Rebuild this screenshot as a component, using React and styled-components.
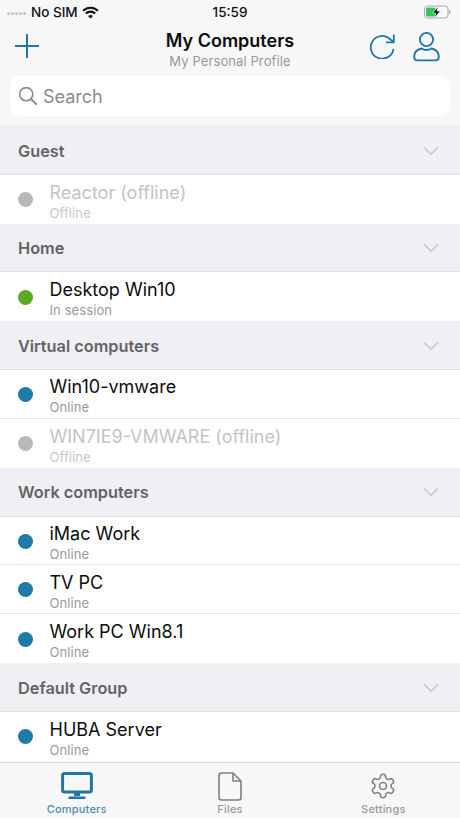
import React from 'react';
import styled, { createGlobalStyle } from 'styled-components';
import { ChevronDown } from 'lucide-react';

const Global = createGlobalStyle`
  html, body { margin: 0; padding: 0; background: #f7f7f8; }
  * { box-sizing: border-box; }
  body { font-family: Inter, "Liberation Sans", sans-serif; -webkit-font-smoothing: antialiased; }
`;

const Page = styled.div`
  width: 460px; height: 818px; overflow: hidden; display: flex; flex-direction: column; background: #f7f7f8;
`;
const StatusBar = styled.div`
  height: 22px; padding: 2px 7px 0 7px; display: grid; grid-template-columns: 1fr auto 1fr; align-items: center;
  font-size: 13.5px; font-weight: 500; color: #111;
`;
const StatusLeft = styled.div`display: flex; align-items: center; gap: 4px;`;
const Dots = styled.div`display: flex; gap: 1px; padding-top: 3px; margin-right: 1px;`;
const Dot = styled.span`width: 3px; height: 3px; border-radius: 50%; background: #c4c4c6;`;
const StatusRight = styled.div`display: flex; justify-content: flex-end; padding-right: 2px;`;
const NavBar = styled.div`
  height: 54px; display: grid; grid-template-columns: 1fr auto 1fr; align-items: start; padding: 9px 14px 0;
`;
const NavLeft = styled.div`display: flex; padding-top: 2px;`;
const NavRight = styled.div`display: flex; justify-content: flex-end; gap: 18px; margin-right: 6px;`;
const Titles = styled.div`display: flex; flex-direction: column; align-items: center;`;
const Title = styled.div`font-size: 18px; font-weight: 600; color: #0c0c0e; line-height: 20px;`;
const Subtitle = styled.div`font-size: 13px; color: #97979b; line-height: 20px; letter-spacing: 0.1px;`;
const SearchWrap = styled.div`height: 50px; padding: 0 10px 10px;`;
const SearchBox = styled.div`
  height: 40px; background: #fff; border-radius: 10px; display: flex; align-items: center; gap: 5px;
  padding: 0 8px; color: #8a8a8e; font-size: 18px;
`;
const List = styled.div`flex: 1; overflow: hidden; display: flex; flex-direction: column;`;
const GroupHeader = styled.div`
  height: 48.75px; flex: none; background: #efeff4; display: flex; align-items: center; justify-content: space-between;
  padding: 1px 16px 0 18px; font-size: 16.3px; font-weight: 600; color: #636366;
  border-top: ${p => (p.$first ? '1px solid #e9e9ec' : 'none')};
  border-bottom: 1px solid #e0e0e3; svg { color: #c8c8cc; }
`;
const Row = styled.div`
  height: 48.9px; flex: none; background: #fff; display: flex; align-items: center; padding-left: 17.5px;
  border-bottom: ${p => (p.$divider ? '1px solid #e6e6e9' : 'none')};
`;
const StatusDot = styled.span`
  width: 15px; height: 15px; border-radius: 50%; background: ${p => p.$color}; flex: none; margin-top: 1px;
`;
const RowText = styled.div`margin-left: 17px; display: flex; flex-direction: column; padding-top: 4px;`;
const RowName = styled.div`
  font-size: 18px; line-height: 24px; color: ${p => (p.$offline ? '#c3c3c6' : '#0c0c0e')};
`;
const RowStatus = styled.div`
  font-size: 13px; line-height: 17px; color: ${p => (p.$offline ? '#c8c8cb' : '#9a9a9e')}; letter-spacing: 0.1px;
`;
const TabBar = styled.div`
  flex: none; height: 56px; background: #f7f7f8; border-top: 1px solid #dcdcde; display: grid; grid-template-columns: repeat(3, 1fr);
`;
const Tab = styled.div`
  display: flex; flex-direction: column; align-items: center; padding-top: 7px; gap: 0;
  color: ${p => (p.$active ? '#2077a6' : '#808084')};
`;
const TabIcon = styled.div`height: 32px; display: flex; align-items: center; justify-content: center;`;
const TabLabel = styled.div`
  font-size: 11px; font-weight: 500; line-height: 14px; letter-spacing: 0.2px;
  color: ${p => (p.$active ? '#4a8db5' : '#98989c')};
`;

const blue = '#1f7ba8';
const green = '#5fa821';
const gray = '#b8b8ba';

const groups = [
  { name: 'Guest', rows: [{ n: 'Reactor (offline)', s: 'Offline', c: gray, off: true }] },
  { name: 'Home', rows: [{ n: 'Desktop Win10', s: 'In session', c: green }] },
  { name: 'Virtual computers', rows: [
    { n: 'Win10-vmware', s: 'Online', c: blue },
    { n: 'WIN7IE9-VMWARE (offline)', s: 'Offline', c: gray, off: true },
  ] },
  { name: 'Work computers', rows: [
    { n: 'iMac Work', s: 'Online', c: blue },
    { n: 'TV PC', s: 'Online', c: blue },
    { n: 'Work PC Win8.1', s: 'Online', c: blue },
  ] },
  { name: 'Default Group', rows: [{ n: 'HUBA Server', s: 'Online', c: blue }] },
];

const Wifi = () => (
  <svg width="17" height="13" viewBox="0 0 18 14" fill="none" stroke="#111" strokeLinecap="butt">
    <path d="M1 5.2C5.5 0.8 12.5 0.8 17 5.2" strokeWidth="2.2" />
    <path d="M3.9 8.1C6.8 5.4 11.2 5.4 14.1 8.1" strokeWidth="2.2" />
    <path d="M6.8 10.8L9 13.2L11.2 10.8C9.9 9.7 8.1 9.7 6.8 10.8Z" fill="#111" strokeWidth="0.6" />
  </svg>
);
const Battery = () => (
  <svg width="27" height="14" viewBox="0 0 27 14">
    <rect x="0.5" y="1" width="23.5" height="12" rx="3" fill="none" stroke="#a9a9ab" />
    <rect x="2" y="2.5" width="9.5" height="9" rx="1.5" fill="#34c759" />
    <path d="M25 5v4c1 -.3 1.6 -1 1.6 -2s-.6 -1.7 -1.6 -2z" fill="#a9a9ab" />
    <path d="M14.2 1.5L8.5 8h3.2l-1 4.7L16.3 6h-3.3z" fill="#111" stroke="#f7f7f8" strokeWidth="0.6" />
  </svg>
);
const Plus = () => (
  <svg width="26" height="26" viewBox="0 0 26 26" stroke="#2077a6" strokeWidth="2" fill="none">
    <path d="M13 1v24M1 13h24" />
  </svg>
);
const Refresh = () => (
  <svg width="26" height="28" viewBox="0 0 26 28" fill="none" stroke="#2077a6" strokeWidth="1.8">
    <path d="M24.5 17.8A11.4 11.4 0 1 1 19 6.5L24.6 11" />
    <path d="M24.8 3.6V11.4H17" />
  </svg>
);
const User = () => (
  <svg width="27" height="31" viewBox="0 0 27 31" fill="none" stroke="#2077a6" strokeWidth="1.9">
    <circle cx="13.5" cy="8.5" r="6.6" />
    <path d="M8.5 17.5C4 18.5 1.2 21 1.2 25.5C1.2 28 2.2 29.4 4.5 29.4H22.5C24.8 29.4 25.8 28 25.8 25.5C25.8 21 23 18.5 18.5 17.5C15.5 19.4 11.5 19.4 8.5 17.5Z" />
  </svg>
);
const Magnifier = () => (
  <svg width="20" height="20" viewBox="0 0 20 20" fill="none" stroke="#8a8a8e" strokeWidth="1.6">
    <circle cx="8.2" cy="8.2" r="6.6" />
    <path d="M13 13l5.6 5.6" strokeWidth="2" />
  </svg>
);
const Monitor = () => (
  <svg width="32" height="28" viewBox="0 0 32 28" fill="none">
    <rect x="1.6" y="1.6" width="28.8" height="18.4" rx="2" stroke="#2077a6" strokeWidth="3" />
    <path d="M13 21h6v3h-6z" fill="#2077a6" />
    <rect x="7.5" y="24.5" width="17" height="2.6" rx="0.6" fill="#2077a6" />
  </svg>
);
const FileIcon = () => (
  <svg width="24" height="29" viewBox="0 0 24 29" fill="none" stroke="#808084" strokeWidth="1.6" strokeLinejoin="round">
    <path d="M3.5 1H15L23 9V25.5C23 27 22 28 20.5 28H3.5C2 28 1 27 1 25.5V3.5C1 2 2 1 3.5 1Z" />
    <path d="M15 1V9H23" />
  </svg>
);
const Gear = () => (
  <svg width="28" height="28" viewBox="0 0 24 24" fill="none" stroke="#808084" strokeWidth="1.35" strokeLinecap="round" strokeLinejoin="round">
    <path d="M12.22 2h-.44a2 2 0 0 0-2 2v.18a2 2 0 0 1-1 1.73l-.43.25a2 2 0 0 1-2 0l-.15-.08a2 2 0 0 0-2.73.73l-.22.38a2 2 0 0 0 .73 2.73l.15.1a2 2 0 0 1 1 1.72v.51a2 2 0 0 1-1 1.74l-.15.09a2 2 0 0 0-.73 2.73l.22.38a2 2 0 0 0 2.73.73l.15-.08a2 2 0 0 1 2 0l.43.25a2 2 0 0 1 1 1.73V20a2 2 0 0 0 2 2h.44a2 2 0 0 0 2-2v-.18a2 2 0 0 1 1-1.73l.43-.25a2 2 0 0 1 2 0l.15.08a2 2 0 0 0 2.73-.73l.22-.39a2 2 0 0 0-.73-2.73l-.15-.08a2 2 0 0 1-1-1.74v-.5a2 2 0 0 1 1-1.74l.15-.09a2 2 0 0 0 .73-2.73l-.22-.38a2 2 0 0 0-2.73-.73l-.15.08a2 2 0 0 1-2 0l-.43-.25a2 2 0 0 1-1-1.73V4a2 2 0 0 0-2-2z" />
    <circle cx="12" cy="12" r="3" />
  </svg>
);

export default function App() {
  return (
    <Page>
      <Global />
      <StatusBar>
        <StatusLeft>
          <Dots><Dot /><Dot /><Dot /><Dot /><Dot /></Dots>
          <span>No SIM</span>
          <Wifi />
        </StatusLeft>
        <span>15:59</span>
        <StatusRight><Battery /></StatusRight>
      </StatusBar>
      <NavBar>
        <NavLeft><Plus /></NavLeft>
        <Titles>
          <Title>My Computers</Title>
          <Subtitle>My Personal Profile</Subtitle>
        </Titles>
        <NavRight><Refresh /><User /></NavRight>
      </NavBar>
      <SearchWrap>
        <SearchBox><Magnifier />Search</SearchBox>
      </SearchWrap>
      <List>
        {groups.map((g, i) => (
          <React.Fragment key={g.name}>
            <GroupHeader $first={i === 0}>
              {g.name}
              <ChevronDown size={26} strokeWidth={1.5} />
            </GroupHeader>
            {g.rows.map((r, j) => (
              <Row key={r.n} $divider={j < g.rows.length - 1}>
                <StatusDot $color={r.c} />
                <RowText>
                  <RowName $offline={r.off}>{r.n}</RowName>
                  <RowStatus $offline={r.off}>{r.s}</RowStatus>
                </RowText>
              </Row>
            ))}
          </React.Fragment>
        ))}
      </List>
      <TabBar>
        <Tab $active><TabIcon><Monitor /></TabIcon><TabLabel $active>Computers</TabLabel></Tab>
        <Tab><TabIcon><FileIcon /></TabIcon><TabLabel>Files</TabLabel></Tab>
        <Tab><TabIcon><Gear /></TabIcon><TabLabel>Settings</TabLabel></Tab>
      </TabBar>
    </Page>
  );
}
